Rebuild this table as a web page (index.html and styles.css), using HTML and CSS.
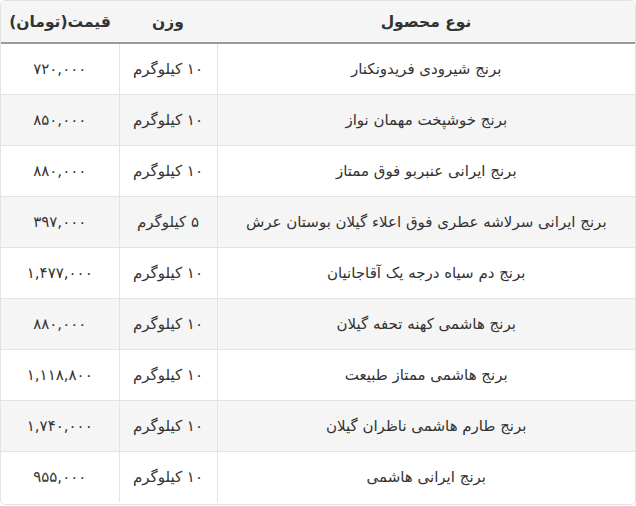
FILE: index.html
```html
<!DOCTYPE html>
<html lang="fa" dir="rtl">
<head>
<meta charset="utf-8">
<link rel="stylesheet" href="styles.css">
</head>
<body>
<div class="wrap">
<table class="prices">
<thead>
<tr><th class="c-name">نوع محصول</th><th class="c-w">وزن</th><th class="c-p">قیمت(تومان)</th></tr>
</thead>
<tbody>
<tr><td>برنج شیرودی فریدونکنار</td><td>۱۰ کیلوگرم</td><td>۷۲۰,۰۰۰</td></tr>
<tr><td>برنج خوشپخت مهمان نواز</td><td>۱۰ کیلوگرم</td><td>۸۵۰,۰۰۰</td></tr>
<tr><td>برنج ایرانی عنبربو فوق ممتاز</td><td>۱۰ کیلوگرم</td><td>۸۸۰,۰۰۰</td></tr>
<tr><td>برنج ایرانی سرلاشه عطری فوق اعلاء گیلان بوستان عرش</td><td>۵ کیلوگرم</td><td>۳۹۷,۰۰۰</td></tr>
<tr><td>برنج دم سیاه درجه یک آقاجانیان</td><td>۱۰ کیلوگرم</td><td>۱,۴۷۷,۰۰۰</td></tr>
<tr><td>برنج هاشمی کهنه تحفه گیلان</td><td>۱۰ کیلوگرم</td><td>۸۸۰,۰۰۰</td></tr>
<tr><td>برنج هاشمی ممتاز طبیعت</td><td>۱۰ کیلوگرم</td><td>۱,۱۱۸,۸۰۰</td></tr>
<tr><td>برنج طارم هاشمی ناظران گیلان</td><td>۱۰ کیلوگرم</td><td>۱,۷۴۰,۰۰۰</td></tr>
<tr><td>برنج ایرانی هاشمی</td><td>۱۰ کیلوگرم</td><td>۹۵۵,۰۰۰</td></tr>
</tbody>
</table>
</div>
</body>
</html>
```
FILE: styles.css
```css
html, body {
  margin: 0;
  padding: 0;
  background: #fff;
}
body {
  font-family: "DejaVu Sans", sans-serif;
  color: #333;
}
.wrap {
  width: 636px;
  height: 505px;
  box-sizing: border-box;
  border: 1px solid #e3e3e3;
  border-radius: 5px;
  overflow: hidden;
}
.prices {
  width: 100%;
  border-collapse: collapse;
  table-layout: fixed;
  font-size: 15px;
}
.prices th {
  background: #f5f5f5;
  height: 41px;
  font-weight: bold;
  font-size: 15.5px;
  border-bottom: 2px solid #999;
  padding: 0;
  text-align: center;
}
.c-name { width: auto; }
.c-w { width: 98px; }
.c-p { width: 118px; }
.prices td {
  height: 50px;
  padding: 0;
  text-align: center;
  border-bottom: 1px solid #e3e3e3;
  border-left: 1px solid #e3e3e3;
}
.prices td:last-child { border-left: none; }
.prices tbody tr:nth-child(even) td { background: #f5f5f5; }
.prices tbody tr:last-child td { border-bottom: none; }
```
